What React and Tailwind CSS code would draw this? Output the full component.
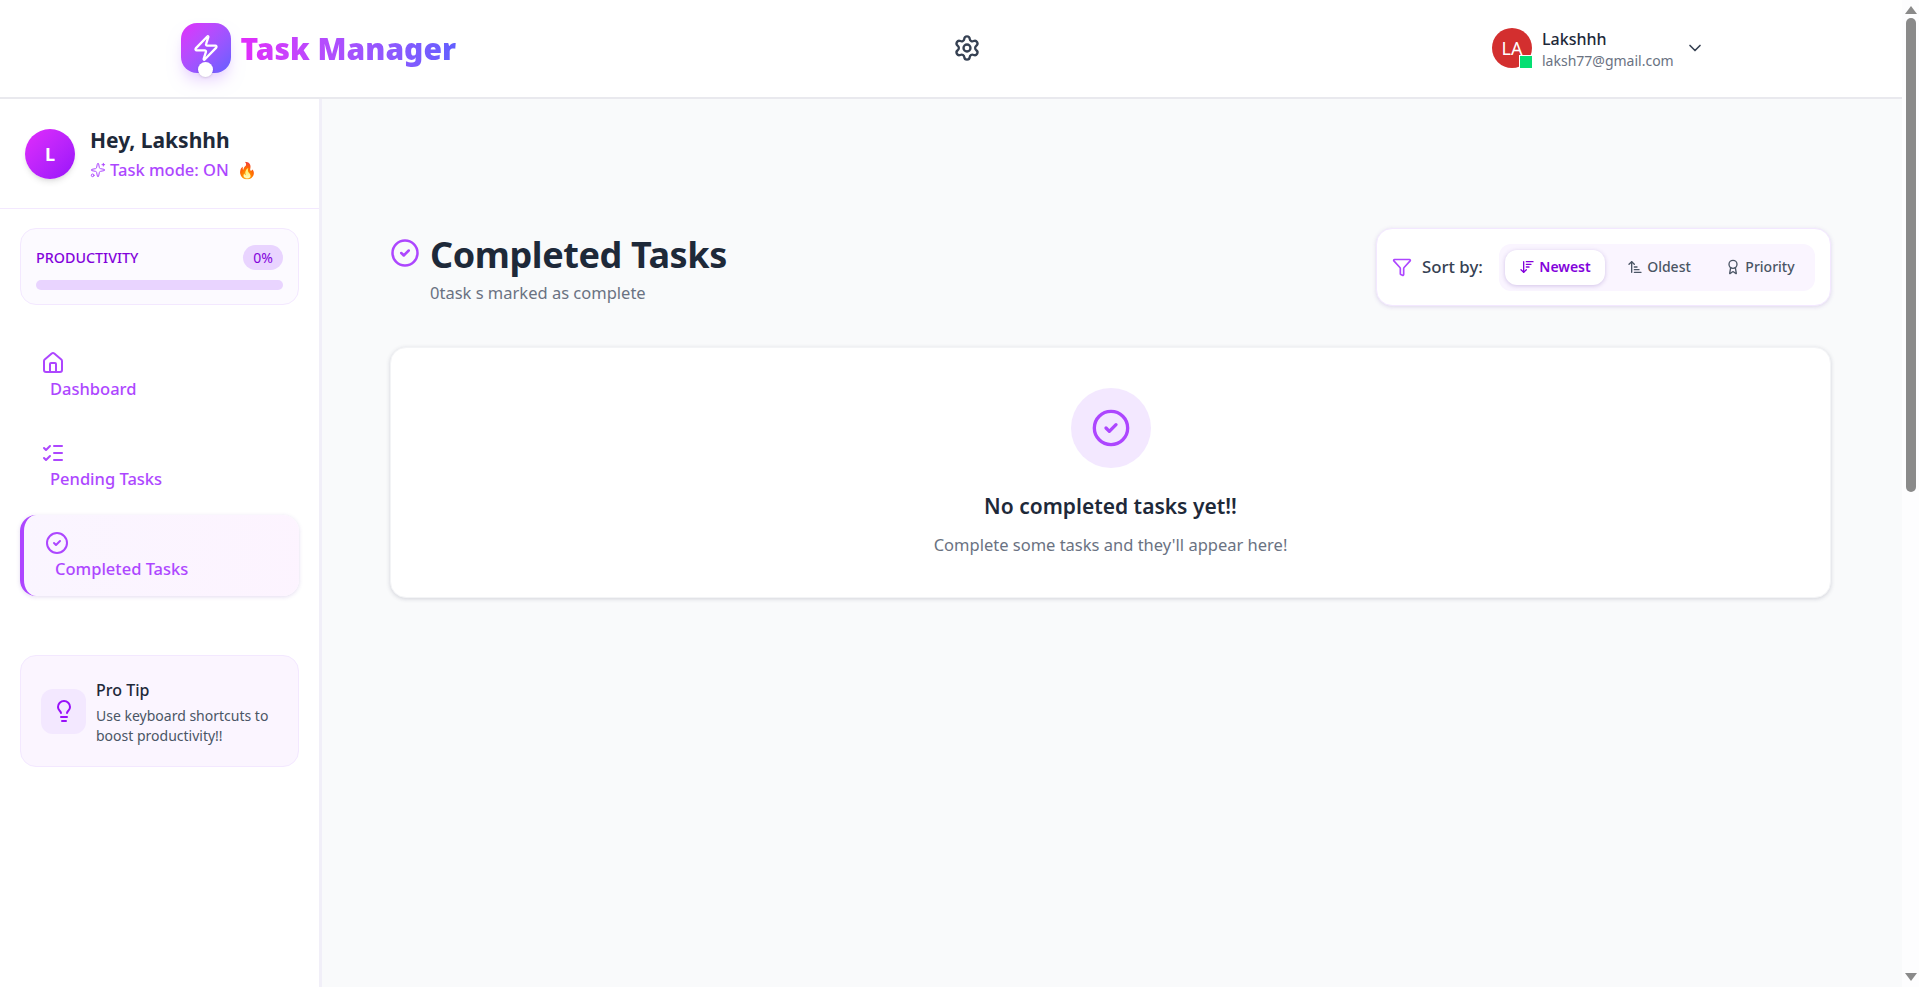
import { House, ListChecks, CircleCheck, Lightbulb, Zap, Settings, ChevronDown, Funnel, Sparkles, ArrowDownWideNarrow, ArrowUpNarrowWide, Award } from 'lucide-react'

function Header() {
  return (
    <header className="h-[99px] shrink-0 bg-white border-b-2 border-[#e9e9ee] shadow-sm flex items-center pl-[181px] pb-[2px]">
      <div className="flex items-center w-[275px]">
        <div className="relative w-[50px] h-[50px] rounded-2xl bg-gradient-to-br from-fuchsia-500 to-indigo-500 flex items-center justify-center shadow-lg shadow-purple-200">
          <Zap className="w-7 h-7 text-white" />
          <span className="absolute -bottom-[4px] left-[17px] w-[15px] h-[15px] rounded-full bg-white shadow" />
        </div>
        <span className="ml-[10px] mt-[3px] text-[30px] leading-[40px] font-black bg-gradient-to-r from-fuchsia-500 to-indigo-500 bg-clip-text text-transparent whitespace-nowrap">Task Manager</span>
      </div>
      <div className="ml-[497px] w-7 h-7 text-gray-700">
        <Settings className="w-7 h-7" />
      </div>
      <div className="ml-[511px] flex items-center">
        <div className="relative w-10 h-10 rounded-full bg-[#d32f2f] flex items-center justify-center text-white text-lg">
          LA
          <span className="absolute -bottom-px -right-px w-3 h-3 bg-green-400 border border-white box-content" />
        </div>
        <div className="ml-[10px] w-[143px] pt-[4px]">
          <p className="text-base leading-5 font-medium text-gray-800">Lakshhh</p>
          <p className="mt-[2px] text-sm leading-5 text-gray-500">laksh77@gmail.com</p>
        </div>
        <ChevronDown className="w-5 h-5 text-gray-700" />
      </div>
    </header>
  )
}

function NavItem({ icon: Icon, label, active }) {
  return (
    <div className={active
      ? 'h-[81px] rounded-2xl border-l-4 border-purple-500 bg-gradient-to-r from-purple-50 to-fuchsia-50 shadow-[0_1px_4px_rgba(120,80,180,0.2)] pl-[21px] pt-[16px] text-purple-500'
      : 'h-[81px] pl-[21px] pt-[16px] text-purple-500'}>
      <Icon className="w-6 h-6" />
      <span className={active
        ? 'block ml-[10px] mt-[2px] text-[16.5px] leading-6 font-medium'
        : 'block ml-[9px] mt-[2px] text-[16.5px] leading-6 font-medium'}>{label}</span>
    </div>
  )
}

function Sidebar() {
  return (
    <aside className="w-[322px] shrink-0 bg-white border-r-[3px] border-[#f1eff8]">
      <div className="h-[110px] border-b border-purple-100 flex items-center pl-[25px]">
        <div className="w-[50px] h-[50px] rounded-full bg-gradient-to-br from-fuchsia-500 to-purple-600 flex items-center justify-center text-white font-bold text-lg shadow-md">L</div>
        <div className="ml-[15px] pt-[2px]">
          <p className="text-[21px] leading-7 font-bold text-gray-800 -mt-[1px]">Hey, Lakshhh</p>
          <p className="mt-[4px] text-[16.5px] leading-6 font-medium text-purple-500 flex items-center gap-1">
            <Sparkles className="w-4 h-4" strokeWidth={1.5} /> Task mode: ON <span className="ml-1 text-base">🔥</span>
          </p>
        </div>
      </div>
      <div className="mx-5 mt-[19px] h-[77px] rounded-2xl border border-purple-100 bg-[#fcfaff] px-[15px] pt-4">
        <div className="flex items-center justify-between h-[25px]">
          <span className="text-[14.3px] font-medium text-purple-700">PRODUCTIVITY</span>
          <span className="w-10 h-[25px] rounded-full bg-purple-200 text-sm text-purple-700 flex items-center justify-center">0%</span>
        </div>
        <div className="mt-[10px] h-[10px] rounded-full bg-purple-200" />
      </div>
      <nav className="mx-5 mt-[30px] flex flex-col gap-[9px]">
        <NavItem icon={House} label="Dashboard" />
        <NavItem icon={ListChecks} label="Pending Tasks" />
        <NavItem icon={CircleCheck} label="Completed Tasks" active />
      </nav>
      <div className="mx-5 mt-[59px] h-[112px] rounded-2xl border border-purple-100 bg-[#fbf5ff] flex items-center pl-5">
        <div className="w-[45px] h-[45px] rounded-xl bg-purple-100 flex items-center justify-center shrink-0">
          <Lightbulb className="w-6 h-6 text-purple-600" />
        </div>
        <div className="ml-[10px] pt-[2px]">
          <p className="text-base leading-6 font-medium text-gray-800">Pro Tip</p>
          <p className="mt-1 text-sm leading-5 text-gray-600">Use keyboard shortcuts to boost productivity!!</p>
        </div>
      </div>
    </aside>
  )
}

function SortBar() {
  return (
    <div className="w-[455px] h-[78px] rounded-2xl bg-white border border-purple-100 shadow-[0_1px_4px_rgba(120,80,180,0.2)] flex items-center pl-[15px]">
      <Funnel className="w-5 h-5 text-purple-500" />
      <span className="ml-[10px] text-[16.8px] font-medium text-gray-700">Sort by:</span>
      <div className="ml-auto mr-[15px] w-[316px] h-[47px] rounded-xl bg-purple-50 flex items-center pl-[6px] text-sm font-medium text-gray-600">
        <span className="w-[100px] h-[35px] rounded-xl bg-white shadow-[0_1px_4px_rgba(120,80,180,0.3)] text-purple-700 font-semibold flex items-center justify-center gap-1">
          <ArrowDownWideNarrow className="w-4 h-4" /> Newest
        </span>
        <span className="ml-1 w-[100px] flex items-center justify-center gap-1"><ArrowUpNarrowWide className="w-4 h-4" /> Oldest</span>
        <span className="ml-[1px] w-[100px] flex items-center justify-center gap-1"><Award className="w-4 h-4" /> Priority</span>
      </div>
    </div>
  )
}

function Scrollbar() {
  return (
    <div className="w-[17px] shrink-0 bg-[#fdfdfe] flex flex-col items-center justify-between pt-[6px] pb-[6px]">
      <div className="w-0 h-0 border-x-[6px] border-x-transparent border-b-[8px] border-b-[#8a8a8a]" />
      <div className="w-[10px] h-[474px] mt-[4px] rounded-full bg-[#8a8a8a] mb-auto" />
      <div className="w-0 h-0 border-x-[6px] border-x-transparent border-t-[8px] border-t-[#8a8a8a]" />
    </div>
  )
}

export default function App() {
  return (
    <div className="h-[987px] flex overflow-hidden font-['Noto_Sans',sans-serif]">
      <div className="flex-1 min-w-0 flex flex-col">
        <Header />
        <div className="flex-1 flex min-h-0 bg-[#f9fafb]">
          <Sidebar />
          <main className="flex-1 pl-[68px] pr-[71px] pt-[129px]">
            <div className="flex items-start justify-between">
              <div className="flex items-start">
                <CircleCheck className="w-[30px] h-[30px] mt-[10px] text-purple-500" />
                <div className="ml-[10px] pt-[5px]">
                  <h1 className="text-4xl leading-[44px] tracking-[-0.4px] font-bold text-gray-800">Completed Tasks</h1>
                  <p className="mt-[4px] text-[16.5px] leading-6 text-gray-500">0task s marked as complete</p>
                </div>
              </div>
              <SortBar />
            </div>
            <div className="mt-[41px] h-[251px] rounded-2xl bg-white border border-gray-100 shadow-[0_1px_4px_rgba(60,60,90,0.2)] flex flex-col items-center pt-10">
              <div className="w-20 h-20 rounded-full bg-purple-100 flex items-center justify-center">
                <CircleCheck className="w-10 h-10 text-purple-500" />
              </div>
              <h2 className="mt-[24px] text-[21px] leading-7 font-semibold text-gray-800">No completed tasks yet!!</h2>
              <p className="mt-[13px] text-[16.5px] leading-6 text-gray-500">Complete some tasks and they'll appear here!</p>
            </div>
          </main>
        </div>
      </div>
      <Scrollbar />
    </div>
  )
}
